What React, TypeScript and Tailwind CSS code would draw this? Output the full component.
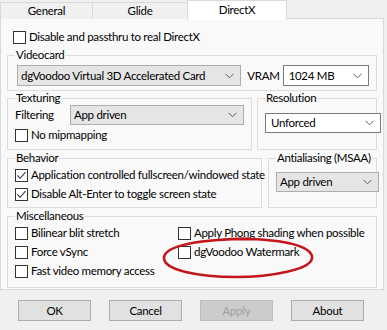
import React from 'react';

const Chevron = () => (
  <svg width="9" height="6" viewBox="0 0 9 6" className="shrink-0">
    <polyline points="0.5,0.8 4.5,4.8 8.5,0.8" fill="none" stroke="#5d5d5d" strokeWidth="1" />
  </svg>
);

const Check = ({ checked = false, label }: { checked?: boolean; label: string }) => (
  <div className="flex items-center h-[14px] gap-[3px]">
    <div className="w-[13px] h-[13px] border border-[#333333] bg-white flex items-center justify-center shrink-0">
      {checked && (
        <svg width="11" height="11" viewBox="0 0 11 11">
          <polyline points="1.5,5.5 4.2,8.3 9.5,2.2" fill="none" stroke="#333333" strokeWidth="1.1" />
        </svg>
      )}
    </div>
    <span className="whitespace-nowrap">{label}</span>
  </div>
);

const Combo = ({ value, white = false, className = '' }: { value: string; white?: boolean; className?: string }) => (
  <div
    className={`flex items-center justify-between pr-[6px] border ${
      white ? 'bg-white border-[#7a7a7a] pl-[5px]' : 'bg-[#e5e5e5] border-[#adadad] pl-[3px]'
    } ${className}`}
  >
    <span className="whitespace-nowrap">{value}</span>
    <Chevron />
  </div>
);

const Group = ({ title, className = '', children }: { title: string; className?: string; children: React.ReactNode }) => (
  <fieldset className={`border border-[#dcdcdc] px-[7px] min-w-0 ${className}`}>
    <legend className="px-[1px] leading-[14px] whitespace-nowrap">{title}</legend>
    {children}
  </fieldset>
);

const Button = ({ label, disabled = false }: { label: string; disabled?: boolean }) => (
  <div
    className={`w-[73px] h-[21px] flex items-center justify-center border ${
      disabled ? 'bg-[#cccccc] border-[#bfbfbf] text-[#a0a0a0]' : 'bg-[#e1e1e1] border-[#adadad] text-black'
    }`}
  >
    {label}
  </div>
);

export default function App() {
  return (
    <div
      className="relative w-[387px] h-[330px] overflow-hidden bg-[#f0f0f0] text-black text-[11.5px] leading-[14px] tracking-[-0.3px]"
      style={{ fontFamily: '"Segoe UI", Lato, sans-serif' }}
    >
      {/* tabs */}
      <div className="flex items-end h-[19px]">
        <div className="w-[93px] h-[17px] border border-b-0 border-[#d9d9d9] bg-[#f0f0f0] flex items-center justify-center">General</div>
        <div className="w-[96px] h-[17px] -ml-px border border-b-0 border-[#d9d9d9] bg-[#f0f0f0] flex items-center justify-center">Glide</div>
        <div className="relative z-10 w-[100px] h-[20px] -ml-px -mb-px border border-b-0 border-[#d9d9d9] bg-white flex items-start pt-[2px] justify-center">DirectX</div>
      </div>

      {/* tab page */}
      <div className="w-[384px] h-[272px] -mt-px border border-[#d9d9d9] bg-[#f9f9f9] px-[6px] pt-[11px]">
        <div className="pl-[6px]">
          <Check label="Disable and passthru to real DirectX" />
        </div>

        <Group title="Videocard" className="mt-[4px] pb-[4px]">
          <div className="flex items-center mt-[3px] pl-[2px]">
            <Combo value="dgVoodoo Virtual 3D Accelerated Card" className="w-[232px] h-[21px]" />
            <span className="ml-[6px] mr-[3px]">VRAM</span>
            <Combo value="1024 MB" white className="w-[89px] h-[21px]" />
          </div>
        </Group>

        <div className="flex gap-[5px]">
          <Group title="Texturing" className="w-[245px] pb-[7px]">
            <div className="flex items-center">
              <span className="w-[55px]">Filtering</span>
              <Combo value="App driven" className="w-[174px] h-[20px]" />
            </div>
            <div className="mt-[3px]">
              <Check label="No mipmapping" />
            </div>
          </Group>
          <Group title="Resolution" className="flex-1 px-[2px] pb-[9px]">
            <Combo value="Unforced" white className="mt-[8px] w-[116px] h-[20px]" />
          </Group>
        </div>

        <div className="flex gap-[6px] mt-[1px]">
          <Group title="Behavior" className="w-[255px] pb-[6px]">
            <div className="flex flex-col gap-[5px] mt-[3px]">
              <Check checked label="Application controlled fullscreen/windowed state" />
              <Check checked label="Disable Alt-Enter to toggle screen state" />
            </div>
          </Group>
          <Group title="Antialiasing (MSAA)" className="flex-1 px-[3px] pb-[11px]">
            <Combo value="App driven" className="mt-[7px] w-[103px] h-[20px]" />
          </Group>
        </div>

        <Group title="Miscellaneous" className="mt-[1px] pb-[9px]">
          <div className="grid grid-cols-[163px_1fr] gap-y-[5px] mt-[3px]">
            <Check label="Bilinear blit stretch" />
            <Check label="Apply Phong shading when possible" />
            <Check label="Force vSync" />
            <Check label="dgVoodoo Watermark" />
            <Check label="Fast video memory access" />
          </div>
        </Group>
      </div>

      {/* buttons */}
      <div className="flex gap-[18px] pl-[18px] mt-[10px]">
        <Button label="OK" />
        <Button label="Cancel" />
        <Button label="Apply" disabled />
        <Button label="About" />
      </div>

      {/* hand drawn annotation */}
      <svg className="absolute left-[158px] top-[234px] pointer-events-none" width="160" height="48" viewBox="0 0 160 48">
        <path
          d="M60,6 C100,2 150,8 154,22 C157,36 110,43 78,43 C40,43 6,36 6,24 C6,12 40,5 92,5"
          fill="none"
          stroke="#c4141c"
          strokeWidth="2.6"
          strokeLinecap="round"
        />
      </svg>
    </div>
  );
}
